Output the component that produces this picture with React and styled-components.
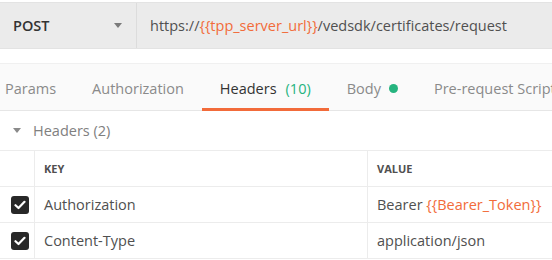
import React from 'react';
import styled, { createGlobalStyle } from 'styled-components';

const GlobalStyle = createGlobalStyle`
  body {
    margin: 0;
    background: #ffffff;
    font-family: "Open Sans", "Liberation Sans", sans-serif;
    overflow: hidden;
  }
`;

const Page = styled.div`
  width: 552px;
  height: 260px;
  padding-top: 2px;
  box-sizing: border-box;
  overflow: hidden;
`;

const UrlBar = styled.div`
  display: flex;
  height: 47px;
  background: #ebebeb;
  border-top: 1px solid #e3e3e3;
  border-bottom: 1px solid #e3e3e3;
  box-sizing: border-box;
`;

const Method = styled.div`
  width: 137px;
  display: flex;
  align-items: center;
  justify-content: space-between;
  padding: 0 14px 0 13px;
  box-sizing: border-box;
  border-right: 1px solid #dcdcdc;
  font-size: 14.5px;
  font-weight: 600;
  color: #333;
`;

const Caret = styled.span`
  width: 0;
  height: 0;
  border-left: 4.5px solid transparent;
  border-right: 4.5px solid transparent;
  border-top: 5px solid #7a7a7a;
`;

const Url = styled.div`
  display: flex;
  align-items: center;
  padding-left: 13px;
  font-size: 14.5px;
  color: #505050;
  white-space: nowrap;
`;

const Var = styled.span`
  color: #f26b3a;
`;

const TabBar = styled.div`
  margin-top: 14px;
  height: 48px;
  background: #fafafa;
  border-top: 1px solid #f0f0f0;
  border-bottom: 1px solid #e6e6e6;
  box-sizing: border-box;
  display: flex;
  align-items: stretch;
  margin-left: -13px;
  white-space: nowrap;
`;

const Tab = styled.div`
  position: relative;
  display: flex;
  align-items: center;
  gap: 8px;
  padding: 3px 18px 0 18px;
  font-size: 14.5px;
  color: ${p => (p.$active ? '#333' : '#8a8a8a')};
  &::after {
    content: '';
    display: ${p => (p.$active ? 'block' : 'none')};
    position: absolute;
    left: 0;
    right: 0;
    bottom: -1px;
    height: 3px;
    background: #f26b3a;
  }
`;

const Count = styled.span`
  color: #26b47f;
  margin-left: 9px;
`;

const Dot = styled.span`
  width: 9px;
  height: 9px;
  border-radius: 50%;
  background: #26b47f;
`;

const Section = styled.div`
  display: flex;
  align-items: center;
  gap: 12px;
  height: 39px;
  padding-left: 13px;
  font-size: 14.5px;
  color: #808080;
`;

const SmallCaret = styled.span`
  width: 0;
  height: 0;
  border-left: 4px solid transparent;
  border-right: 4px solid transparent;
  border-top: 5px solid #8a8a8a;
`;

const Table = styled.div`
  display: grid;
  grid-template-columns: 35px 333px 1fr;
  border-top: 1px solid #ececec;
`;

const Cell = styled.div`
  height: 36px;
  display: flex;
  align-items: center;
  padding-left: ${p => (p.$check ? '11px' : '9px')};
  border-right: ${p => (p.$last ? 'none' : '1px solid #ececec')};
  border-bottom: 1px solid #ececec;
  box-sizing: border-box;
  font-size: ${p => (p.$head ? '11px' : '14.5px')};
  font-weight: ${p => (p.$head ? 700 : 400)};
  color: #505050;
  white-space: nowrap;
  overflow: hidden;
`;

const Box = styled.span`
  width: 18px;
  height: 18px;
  border-radius: 3px;
  background: #282828;
  display: flex;
  align-items: center;
  justify-content: center;
`;

function Check() {
  return (
    <Box>
      <svg width="12" height="10" viewBox="0 0 12 10">
        <path d="M1.5 5.2 L4.5 8 L10.5 1.8" fill="none" stroke="#fff" strokeWidth="2.2" strokeLinecap="round" strokeLinejoin="round" />
      </svg>
    </Box>
  );
}

const rows = [
  { key: 'Authorization', value: <span>Bearer <Var>{'{{Bearer_Token}}'}</Var></span> },
  { key: 'Content-Type', value: 'application/json' },
];

export default function App() {
  return (
    <Page>
      <GlobalStyle />
      <UrlBar>
        <Method>POST<Caret /></Method>
        <Url>
          <span>https://<Var>{'{{tpp_server_url}}'}</Var>/vedsdk/certificates/request</span>
        </Url>
      </UrlBar>
      <TabBar>
        <Tab>Params</Tab>
        <Tab>Authorization</Tab>
        <Tab $active><span>Headers<Count>(10)</Count></span></Tab>
        <Tab>Body<Dot /></Tab>
        <Tab>Pre-request Script</Tab>
      </TabBar>
      <Section>
        <SmallCaret />
        Headers (2)
      </Section>
      <Table>
        <Cell />
        <Cell $head>KEY</Cell>
        <Cell $head $last>VALUE</Cell>
        {rows.map(r => (
          <React.Fragment key={r.key}>
            <Cell $check><Check /></Cell>
            <Cell>{r.key}</Cell>
            <Cell $last>{r.value}</Cell>
          </React.Fragment>
        ))}
      </Table>
    </Page>
  );
}
